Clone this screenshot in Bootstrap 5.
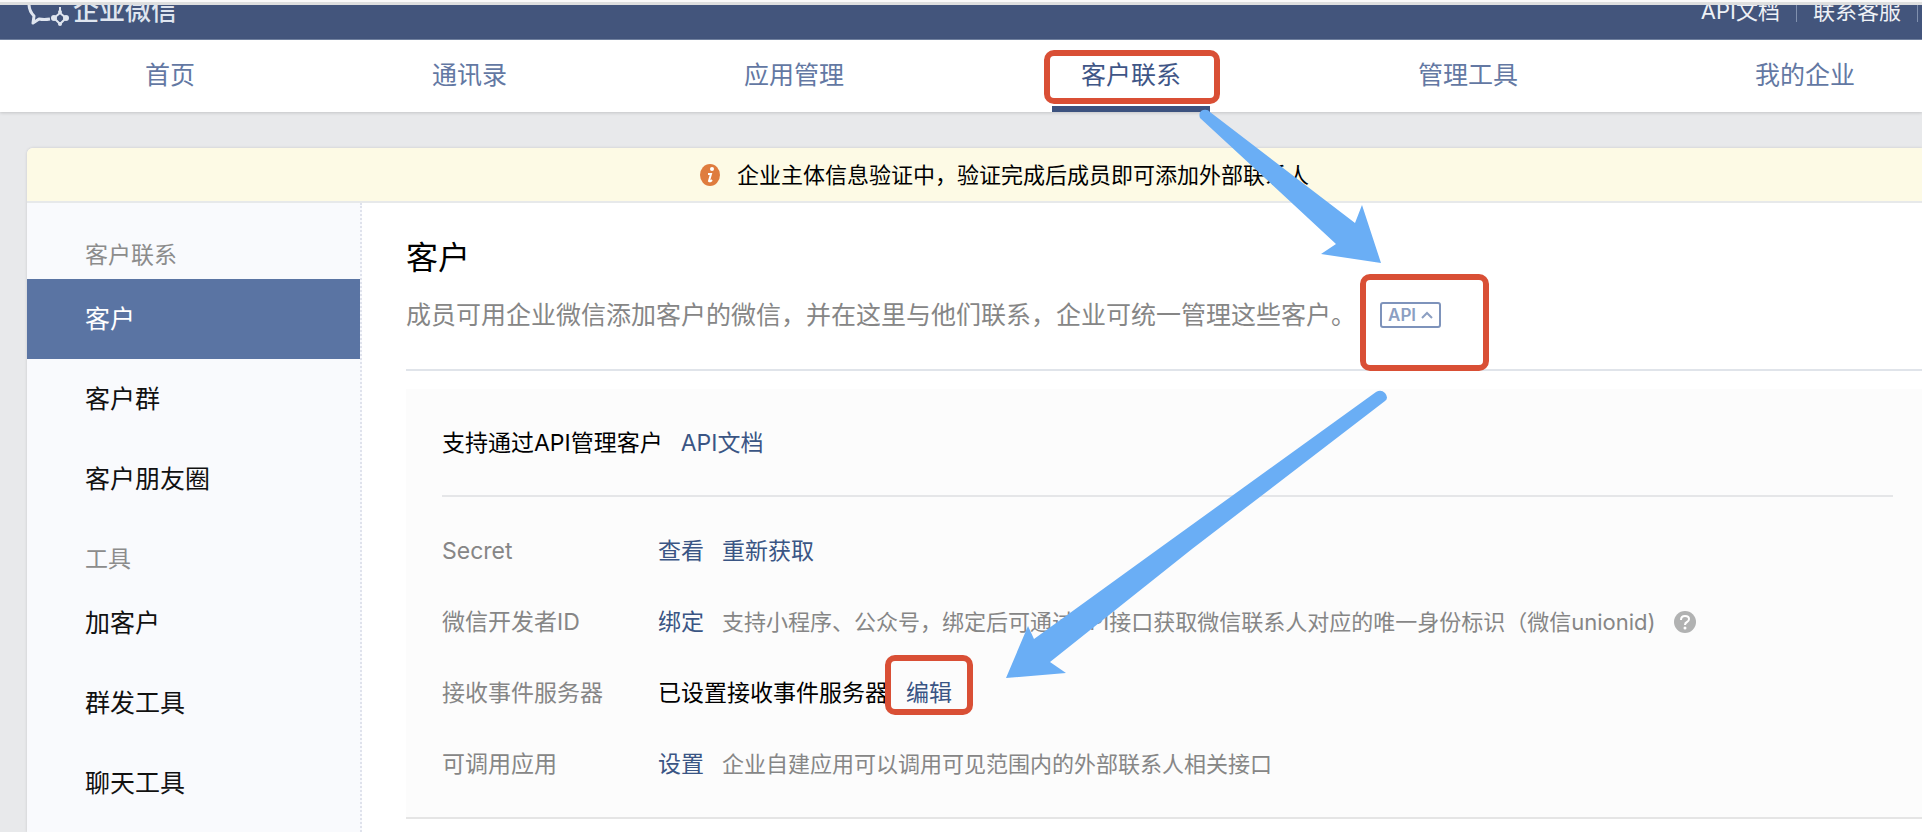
<!DOCTYPE html>
<html lang="zh-CN">
<head>
<meta charset="utf-8">
<meta name="viewport" content="width=device-width, initial-scale=1">
<title>企业微信 - 客户联系</title>
<link href="https://cdn.jsdelivr.net/npm/bootstrap@5.3.0/dist/css/bootstrap.min.css" rel="stylesheet">
<style>
  :root { --navy: #43557c; --link: #3a5584; --muted: #868686; --mark-red: #d94f35; --arrow: #6aaef5; }
  body { font-family: Inter, "Noto Sans CJK SC", sans-serif; font-size: 23px; line-height: 32px; color: #000; background: #e8e9eb; overflow-x: hidden; }
  a { color: var(--link); text-decoration: none; }
  .fs-note { font-size: 22px; }
  .text-soft { color: var(--muted); }
  .gap-text { gap: 18px; }

  .window-edge { height: 5px; background: #dedfdf; border-top: 2px solid #fafafa; }
  .topbar { height: 35px; padding: 0 4px 12px 27px; background: var(--navy); border-bottom: 1px solid #7484a3; overflow: hidden; font-size: 22px; }
  .topbar a { color: #eef1f6; }
  .brand-name { font-size: 26px; font-weight: 500; color: #dfe5ef; }
  .rule-v { width: 1px; height: 22px; background: #8090ae; }

  .mainnav { height: 72px; padding: 0 38px 0 116px; background: #fff; box-shadow: 0 1px 3px rgba(0,0,0,.16); font-size: 25px; z-index: 2; }
  .mainnav .nav-link { height: 72px; padding: 19px 29px 0; color: #6378a3; white-space: nowrap; }
  .mainnav .nav-link.active { color: #3f5687; border-bottom: 6px solid #3c527f; }

  .callout-frame { border: 6px solid var(--mark-red); border-radius: 10px; pointer-events: none; }
  .frame-nav { inset: 10px -10px 8px -8px; }
  .frame-api { inset: -28px -48px -43px -20px; }
  .frame-edit { inset: -22px -21px -6px; }
  .arrow { fill: var(--arrow); pointer-events: none; z-index: 3; }
  .arrow-nav { left: 146px; top: 68px; }
  .arrow-edit { left: 99px; top: -288px; }

  .shell { margin: 36px 0 0 27px; background: #fff; border-top-left-radius: 6px; box-shadow: 0 0 3px rgba(0,0,0,.15); }
  .notice { height: 55px; padding-left: 60px; background: #fdfae5; border-bottom: 2px solid #e7e9ea; border-top-left-radius: 6px; font-size: 22px; }
  .sidebar { width: 335px; padding-top: 32px; background: #f9fafd; border-right: 2px dotted #dfe2ec; }
  .side-title { padding: 0 58px 4px; font-size: 23px; line-height: 40px; color: #8c8c8c; }
  .side-title + .nav { font-size: 25px; }
  .sidebar .nav-link { padding: 0 58px; line-height: 80px; color: #111; border-radius: 0; }
  .sidebar .nav-link.active { background: #5a74a3; color: #fff; }
  .side-title.second { padding-top: 20px; }

  .content { padding: 34px 0 0 44px; min-width: 0; }
  .content h1 { font-size: 32px; line-height: 42px; font-weight: 400; margin: 0 0 20px; }
  .lead-row { gap: 24px; font-size: 25px; padding-bottom: 38px; border-bottom: 2px solid #e0e4ea; }
  .btn-api { padding: 0 6px; height: 26px; line-height: 20px; font-size: 17px; font-weight: 600; color: #8c9fc2; border: 2px solid #7e93bb; border-radius: 3px; gap: 5px; }
  .panel { margin-top: 18px; padding: 38px 29px 18px 36px; background: #fcfcfc; border-bottom: 2px solid #e5e5e5; }
  .panel-head { padding-bottom: 36px; border-bottom: 2px solid #e5e6e8; margin-bottom: 18px; }
  .set-row { height: 71px; white-space: nowrap; }
  .set-name { width: 216px; flex: none; color: var(--muted); }
</style>
</head>
<body class="min-vh-100 d-flex flex-column">
<div class="window-edge"></div>

<header class="topbar d-flex justify-content-between align-items-end">
  <a href="#" class="d-flex align-items-end gap-1">
    <svg width="42" height="38" viewBox="0 0 42 38" fill="none" stroke="#dfe5ef" stroke-width="3" stroke-linejoin="round" aria-hidden="true">
      <path d="M32 15C32 7 25 2 17 2S2 7 2 15c0 5 2 9 5 12l-1 7 6-4q5 1 11 0"/>
      <path d="M33 18v6l6 5-6 6-6-6 6-5" stroke-width="2"/>
      <g fill="#dfe5ef" stroke="none"><circle cx="33" cy="23" r="2"/><circle cx="39" cy="29" r="3"/><circle cx="33" cy="35" r="2"/><circle cx="27" cy="29" r="3"/></g>
    </svg>
    <span class="brand-name">企业微信</span>
  </a>
  <nav class="d-flex align-items-center">
    <a href="#">API文档</a><span class="rule-v ms-3 me-3"></span>
    <a href="#">联系客服</a><span class="rule-v ms-3"></span>
  </nav>
</header>

<nav class="mainnav nav flex-nowrap justify-content-between position-relative">
  <a class="nav-link" href="#">首页</a>
  <a class="nav-link" href="#">通讯录</a>
  <a class="nav-link" href="#">应用管理</a>
  <div class="position-relative">
    <a class="nav-link active" href="#" aria-current="page">客户联系</a>
    <span class="callout-frame frame-nav position-absolute"></span>
    <svg class="arrow arrow-nav position-absolute" width="184" height="156" viewBox="0 0 184 156" aria-hidden="true">
      <path d="M2 10Q0 4 5 2Q10 1 12 4L157 115L164 97L183 155L123 146L138 136L82 84Z"/>
    </svg>
  </div>
  <a class="nav-link" href="#">管理工具</a>
  <a class="nav-link" href="#">我的企业</a>
</nav>

<div class="shell flex-grow-1 d-flex flex-column">
  <div class="notice d-flex align-items-center justify-content-center">
    <svg class="me-3" width="21" height="22" viewBox="0 0 21 22" aria-hidden="true">
      <ellipse cx="10" cy="11" rx="10" ry="11" fill="#df7c3e"/>
      <circle cx="12" cy="5" r="2" fill="#fff"/>
      <path d="M8 10h3l-2 7q1 1 3-1" fill="none" stroke="#fff" stroke-width="2"/>
    </svg>
    <span>企业主体信息验证中，验证完成后成员即可添加外部联系人</span>
  </div>

  <div class="d-flex flex-grow-1">
    <aside class="sidebar flex-shrink-0">
      <div class="side-title">客户联系</div>
      <nav class="nav flex-column">
        <a class="nav-link active" href="#" aria-current="page">客户</a>
        <a class="nav-link" href="#">客户群</a>
        <a class="nav-link" href="#">客户朋友圈</a>
      </nav>
      <div class="side-title second">工具</div>
      <nav class="nav flex-column">
        <a class="nav-link" href="#">加客户</a>
        <a class="nav-link" href="#">群发工具</a>
        <a class="nav-link" href="#">聊天工具</a>
      </nav>
    </aside>

    <main class="content flex-grow-1">
      <h1>客户</h1>
      <div class="lead-row d-flex align-items-center text-soft text-nowrap">
        <span>成员可用企业微信添加客户的微信，并在这里与他们联系，企业可统一管理这些客户。</span>
        <span class="position-relative d-flex">
          <button type="button" class="btn btn-api d-flex align-items-center">API
            <svg width="12" height="8" viewBox="0 0 12 8" fill="none" stroke="currentColor" stroke-width="2" aria-hidden="true"><path d="M1 7l5-5 5 5"/></svg>
          </button>
          <span class="callout-frame frame-api position-absolute"></span>
        </span>
      </div>

      <section class="panel">
        <div class="panel-head d-flex gap-text"><span>支持通过API管理客户</span><a href="#">API文档</a></div>
        <div class="set-row d-flex align-items-center">
          <span class="set-name">Secret</span>
          <span class="d-flex gap-text"><a href="#">查看</a><a href="#">重新获取</a></span>
        </div>
        <div class="set-row d-flex align-items-center">
          <span class="set-name">微信开发者ID</span>
          <span class="d-flex gap-text align-items-center"><a href="#">绑定</a>
            <span class="fs-note text-soft">支持小程序、公众号，绑定后可通过API接口获取微信联系人对应的唯一身份标识（微信unionid)</span>
            <svg width="22" height="22" viewBox="0 0 22 22" role="img" aria-label="帮助">
              <circle cx="11" cy="11" r="11" fill="#b1b2b2"/>
              <path d="M7 9q0-4 4-4t4 3q0 2-2 3t-2 3" fill="none" stroke="#fff" stroke-width="2"/>
              <circle cx="11" cy="17" r="1.5" fill="#fff"/>
            </svg>
          </span>
        </div>
        <div class="set-row d-flex align-items-center">
          <span class="set-name">接收事件服务器</span>
          <span class="d-flex gap-text"><span>已设置接收事件服务器</span>
            <span class="position-relative"><a href="#">编辑</a>
              <span class="callout-frame frame-edit position-absolute"></span>
              <svg class="arrow arrow-edit position-absolute" width="384" height="290" viewBox="0 0 384 290" aria-hidden="true">
                <path d="M371 3Q376 0 380 4Q384 9 380 12L187 160L45 273L61 284L1 289L23 237L29 250L152 161Z"/>
              </svg>
            </span>
          </span>
        </div>
        <div class="set-row d-flex align-items-center">
          <span class="set-name">可调用应用</span>
          <span class="d-flex gap-text"><a href="#">设置</a><span class="fs-note text-soft">企业自建应用可以调用可见范围内的外部联系人相关接口</span></span>
        </div>
      </section>
    </main>
  </div>
</div>
<script src="https://cdn.jsdelivr.net/npm/bootstrap@5.3.0/dist/js/bootstrap.bundle.min.js"></script>
</body>
</html>
